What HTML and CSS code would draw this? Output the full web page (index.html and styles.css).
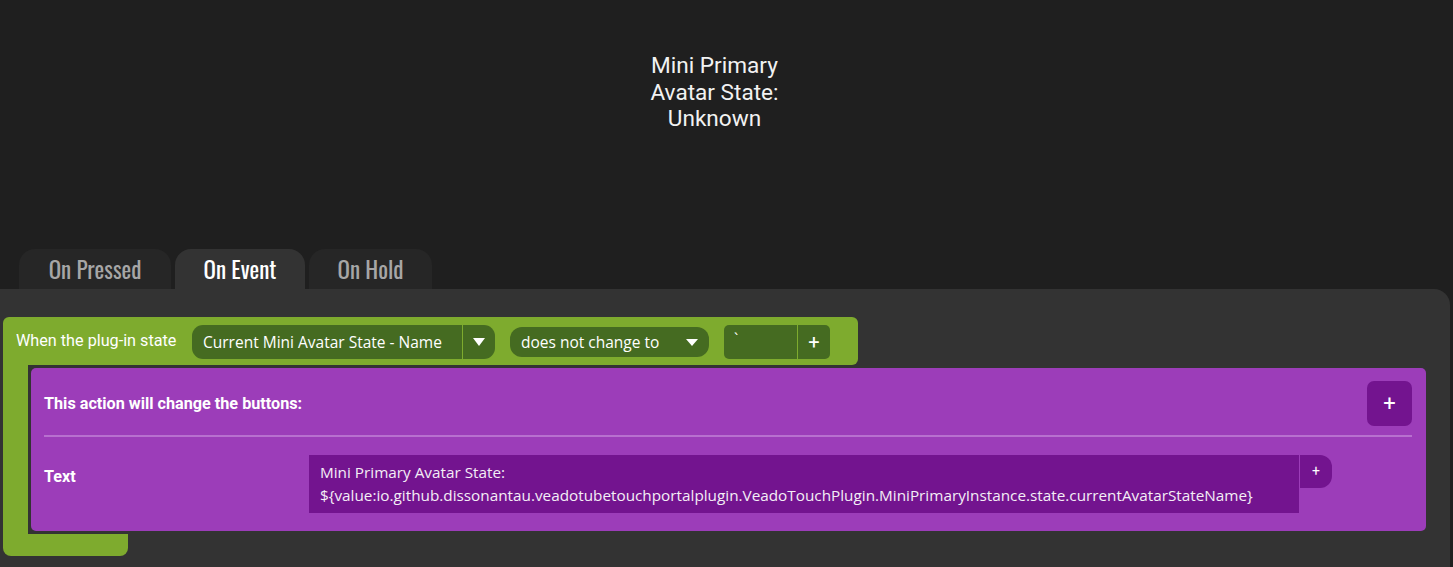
FILE: index.html
```html
<!DOCTYPE html>
<html lang="en">
<head>
<meta charset="utf-8">
<title>Button editor</title>
<link rel="stylesheet" href="styles.css">
</head>
<body>
<div class="page">
  <div class="preview">
    <div class="preview-title">
      <span>Mini Primary</span>
      <span>Avatar State:</span>
      <span>Unknown</span>
    </div>
  </div>
  <div class="tabs">
    <div class="tab tab-pressed">On Pressed</div>
    <div class="tab tab-event active">On Event</div>
    <div class="tab tab-hold">On Hold</div>
  </div>
  <div class="panel">
    <div class="event">
      <div class="event-head">
        <div class="event-label">When the plug-in state</div>
        <div class="select select-state">
          <div class="select-text">Current Mini Avatar State - Name</div>
          <div class="select-arrow"><span class="tri"></span></div>
        </div>
        <div class="select select-cond">
          <div class="select-text">does not change to</div>
          <span class="tri"></span>
        </div>
        <div class="value-input">
          <div class="value-text">`</div>
          <div class="value-plus">+</div>
        </div>
      </div>
      <div class="event-body">
        <div class="action-wrap">
          <div class="action">
            <div class="action-head">
              <div class="action-title">This action will change the buttons:</div>
              <div class="action-add">+</div>
            </div>
            <div class="action-divider"></div>
            <div class="action-row">
              <div class="row-label">Text</div>
              <div class="row-field">
                <div class="text-box">Mini Primary Avatar State:<br>${value:io.github.dissonantau.veadotubetouchportalplugin.VeadoTouchPlugin.MiniPrimaryInstance.state.currentAvatarStateName}</div>
                <div class="text-plus">+</div>
              </div>
            </div>
          </div>
        </div>
      </div>
      <div class="event-foot"></div>
    </div>
  </div>
</div>
</body>
</html>
```

FILE: styles.css
```css
* { box-sizing: border-box; }

html, body {
  margin: 0;
  padding: 0;
  background: #1f1f1f;
  height: 100%;
  overflow: hidden;
}

body {
  font-family: Roboto, "Liberation Sans", sans-serif;
  color: #fff;
}

.page {
  width: 1450px;
  height: 567px;
  display: flex;
  flex-direction: column;
}

.preview {
  height: 249px;
  display: flex;
  justify-content: center;
  padding-right: 21px;
  padding-top: 53px;
}

.preview-title {
  display: flex;
  flex-direction: column;
  align-items: center;
  font-family: Roboto, "Liberation Sans", sans-serif;
  font-size: 22.6px;
  line-height: 26.5px;
  color: #f2f2f2;
}

.tabs {
  display: flex;
  gap: 4px;
  padding-left: 19px;
  height: 40px;
}

.tab {
  height: 40px;
  border-radius: 16px 16px 0 0;
  background: #262626;
  color: #a6a6a6;
  font-family: "Oswald", "Liberation Sans Narrow", "DejaVu Sans Condensed", "Roboto Condensed", sans-serif;
  font-stretch: condensed;
  font-size: 23px;
  display: flex;
  align-items: center;
  justify-content: center;
  padding-top: 0;
}

.tab-pressed { width: 152px; }
.tab-event { width: 130px; }
.tab-hold { width: 123px; }

.tab.active {
  background: #333333;
  color: #ffffff;
}

.panel {
  flex: 1;
  background: #333333;
  border-radius: 0 16px 0 0;
  padding: 28px 21px 0 3px;
}

.event {
  display: flex;
  flex-direction: column;
  align-items: flex-start;
}

.event-head {
  width: 855px;
  height: 48px;
  background: #7eab2e;
  border-radius: 6px 6px 6px 0;
  display: flex;
  align-items: center;
  padding: 1px 0 0 13px;
}

.event-label {
  font-family: Roboto, "Liberation Sans", sans-serif;
  font-size: 16.2px;
  color: #fff;
  width: 176px;
  margin-top: -3px;
}

.select {
  background: #456b21;
  display: flex;
  align-items: center;
  font-family: "Open Sans", "Noto Sans", sans-serif;
  font-size: 15.5px;
  color: #fff;
}

.select-state {
  width: 303px;
  height: 34px;
  border-radius: 11px;
}

.select-state .select-text {
  width: 271px;
  padding-left: 11px;
  border-right: 1px solid #7eab2e;
  height: 100%;
  display: flex;
  align-items: center;
  white-space: nowrap;
}

.select-arrow {
  flex: 1;
  display: flex;
  justify-content: center;
  align-items: center;
  height: 100%;
}

.tri {
  width: 0;
  height: 0;
  border-left: 6.5px solid transparent;
  border-right: 6.5px solid transparent;
  border-top: 8px solid #ffffff;
  margin-top: 1px;
}

.select-cond {
  width: 199px;
  height: 30px;
  border-radius: 12px;
  margin-left: 15px;
  padding: 0 11px;
  justify-content: space-between;
  white-space: nowrap;
}

.select-cond .tri {
  border-left-width: 6px;
  border-right-width: 6px;
  border-top-width: 7px;
}

.value-input {
  width: 106px;
  height: 34px;
  border-radius: 5px;
  margin-left: 15px;
  background: #456b21;
  display: flex;
  font-family: "Open Sans", "Noto Sans", sans-serif;
  color: #fff;
}

.value-text {
  width: 74px;
  border-right: 1px solid #7eab2e;
  padding: 3px 0 0 10px;
  font-size: 15px;
}

.value-plus {
  flex: 1;
  display: flex;
  align-items: center;
  justify-content: center;
  font-size: 20px;
  font-family: Roboto, "Liberation Sans", sans-serif;
}

.event-body {
  align-self: stretch;
  background: #7eab2e;
  padding-left: 25px;
}

.action-wrap {
  background: #333333;
  padding: 3px;
}

.action {
  background: #9c3db9;
  border-radius: 5px;
  padding: 13px 14px 18px 13px;
}

.action-head {
  display: flex;
  align-items: center;
  justify-content: space-between;
}

.action-title {
  font-family: Roboto, "Liberation Sans", sans-serif;
  font-weight: 700;
  font-size: 16.2px;
  color: #fff;
}

.action-add {
  width: 45px;
  height: 45px;
  border-radius: 7px;
  background: #73148f;
  display: flex;
  align-items: center;
  justify-content: center;
  font-size: 22px;
  color: #fff;
  font-family: Roboto, "Liberation Sans", sans-serif;
}

.action-divider {
  height: 2px;
  background: #b870cf;
  margin-top: 9px;
}

.action-row {
  display: flex;
  align-items: flex-start;
  margin-top: 18px;
}

.row-label {
  width: 265px;
  font-family: Roboto, "Liberation Sans", sans-serif;
  font-weight: 700;
  font-size: 16.2px;
  padding-top: 12px;
}

.row-field {
  display: flex;
  align-items: flex-start;
  gap: 1px;
}

.text-box {
  width: 990px;
  background: #73148f;
  padding: 6px 11px;
  font-family: "Open Sans", "Noto Sans", sans-serif;
  font-size: 15.3px;
  line-height: 23px;
  color: #f4eef6;
  white-space: nowrap;
}

.text-plus {
  width: 32px;
  height: 33px;
  background: #73148f;
  border-radius: 0 12px 12px 0;
  display: flex;
  align-items: center;
  justify-content: center;
  font-size: 14px;
  color: #fff;
  font-family: Roboto, "Liberation Sans", sans-serif;
  padding-bottom: 2px;
}

.event-foot {
  width: 125px;
  height: 22px;
  background: #7eab2e;
  border-radius: 0 0 8px 8px;
}
```
